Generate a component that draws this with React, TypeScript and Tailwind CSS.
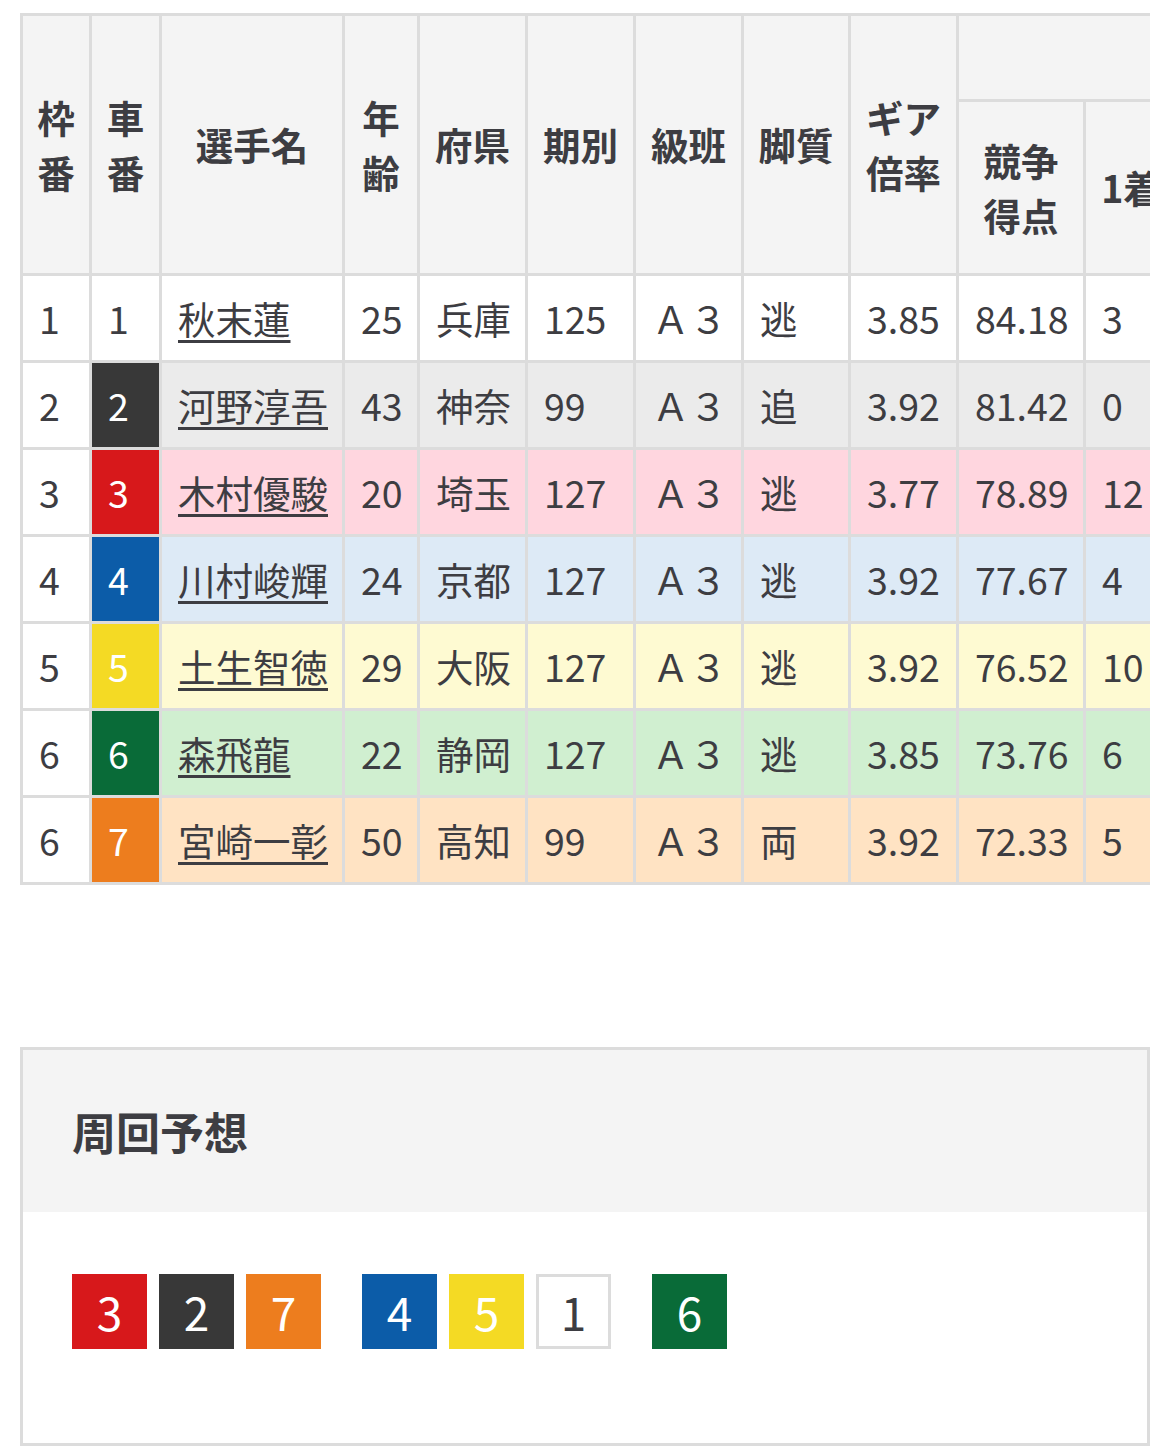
const carColor: Record<number, string> = {
  1: "bg-white text-[#3d3d42]",
  2: "bg-[#383838] text-white",
  3: "bg-[#d7181b] text-white",
  4: "bg-[#0c5ca8] text-white",
  5: "bg-[#f4da24] text-white",
  6: "bg-[#096b38] text-white",
  7: "bg-[#ed7d1e] text-white",
};

const rowColor: Record<number, string> = {
  1: "bg-white",
  2: "bg-[#ebebeb]",
  3: "bg-[#ffd6df]",
  4: "bg-[#ddeaf6]",
  5: "bg-[#fefad2]",
  6: "bg-[#d0efd0]",
  7: "bg-[#ffe3c3]",
};

const riders = [
  { waku: 1, car: 1, name: "秋末蓮", age: 25, pref: "兵庫", term: 125, style: "逃", gear: "3.85", score: "84.18", first: 3 },
  { waku: 2, car: 2, name: "河野淳吾", age: 43, pref: "神奈", term: 99, style: "追", gear: "3.92", score: "81.42", first: 0 },
  { waku: 3, car: 3, name: "木村優駿", age: 20, pref: "埼玉", term: 127, style: "逃", gear: "3.77", score: "78.89", first: 12 },
  { waku: 4, car: 4, name: "川村峻輝", age: 24, pref: "京都", term: 127, style: "逃", gear: "3.92", score: "77.67", first: 4 },
  { waku: 5, car: 5, name: "土生智徳", age: 29, pref: "大阪", term: 127, style: "逃", gear: "3.92", score: "76.52", first: 10 },
  { waku: 6, car: 6, name: "森飛龍", age: 22, pref: "静岡", term: 127, style: "逃", gear: "3.85", score: "73.76", first: 6 },
  { waku: 6, car: 7, name: "宮崎一彰", age: 50, pref: "高知", term: 99, style: "両", gear: "3.92", score: "72.33", first: 5 },
];

const lineup = [[3, 2, 7], [4, 5, 1], [6]];

function Th({ children, className = "" }: { children?: React.ReactNode; className?: string }) {
  return (
    <div className={`flex items-center justify-center bg-[#f4f4f4] px-3 text-center font-bold leading-[1.45] ${className}`}>
      {children}
    </div>
  );
}

function Td({ children, className = "" }: { children?: React.ReactNode; className?: string }) {
  return <div className={`flex items-center whitespace-nowrap px-4 ${className}`}>{children}</div>;
}

export default function App() {
  return (
    <div className="min-h-[1446px] bg-white pt-[13px] font-['Noto_Sans_CJK_JP',sans-serif] text-[37.5px] text-[#3d3d42]">
      <div className="mx-[20px] overflow-hidden">
        <div className="grid w-max grid-cols-[66px_67px_180px_72px_105px_105px_105px_104px_105px_124px_90px] grid-rows-[83px_171px_repeat(7,84px)] gap-[3px] bg-[#dcdcdc] p-[3px]">
          <Th className="row-span-2">枠番</Th>
          <Th className="row-span-2">車番</Th>
          <Th className="row-span-2">選手名</Th>
          <Th className="row-span-2">年齢</Th>
          <Th className="row-span-2">府県</Th>
          <Th className="row-span-2">期別</Th>
          <Th className="row-span-2">級班</Th>
          <Th className="row-span-2">脚質</Th>
          <Th className="row-span-2">ギア倍率</Th>
          <Th className="col-span-2" />
          <Th>競争得点</Th>
          <Th>1着</Th>

          {riders.map((r) => (
            <div key={r.car} className="contents">
              <Td className="bg-white">{r.waku}</Td>
              <Td className={carColor[r.car]}>{r.car}</Td>
              <Td className={rowColor[r.car]}>
                <span className="underline decoration-[3px] underline-offset-[6px]">{r.name}</span>
              </Td>
              <Td className={rowColor[r.car]}>{r.age}</Td>
              <Td className={rowColor[r.car]}>{r.pref}</Td>
              <Td className={rowColor[r.car]}>{r.term}</Td>
              <Td className={rowColor[r.car]}>Ａ３</Td>
              <Td className={rowColor[r.car]}>{r.style}</Td>
              <Td className={rowColor[r.car]}>{r.gear}</Td>
              <Td className={rowColor[r.car]}>{r.score}</Td>
              <Td className={rowColor[r.car]}>{r.first}</Td>
            </div>
          ))}
        </div>
      </div>

      <section className="mx-[20px] mt-[162px] border-[3px] border-[#dcdcdc]">
        <div className="flex h-[162px] items-center bg-[#f4f4f4] px-[49px]">
          <h2 className="text-[44px] font-bold">周回予想</h2>
        </div>
        <div className="flex h-[231px] items-start gap-[41px] px-[49px] pt-[62px]">
          {lineup.map((group, i) => (
            <div key={i} className="flex gap-[12px]">
              {group.map((n) => (
                <div
                  key={n}
                  className={`flex h-[75px] w-[75px] items-center justify-center text-[46px] ${
                    n === 1 ? "border-[3px] border-[#dcdcdc] bg-white text-[#3d3d42]" : carColor[n]
                  }`}
                >
                  {n}
                </div>
              ))}
            </div>
          ))}
        </div>
      </section>
    </div>
  );
}
